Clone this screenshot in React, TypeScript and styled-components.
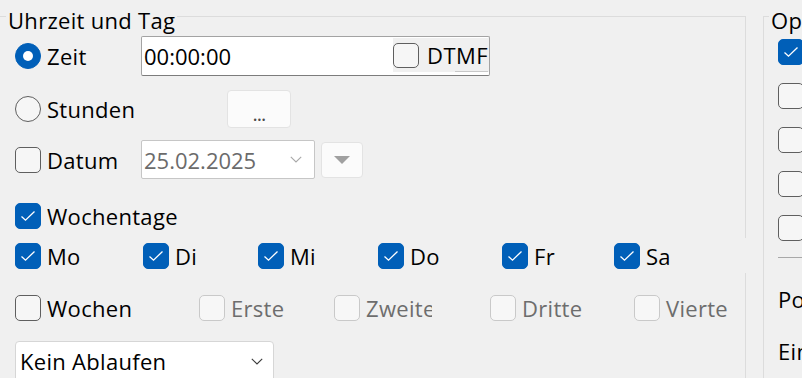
import React from "react";
import styled, { createGlobalStyle } from "styled-components";

const GlobalStyle = createGlobalStyle`
  html, body {
    margin: 0;
    padding: 0;
    background: #f0f0f0;
  }
  body {
    font-family: "Open Sans", "Noto Sans", sans-serif;
    font-size: 22px;
    letter-spacing: 0.3px;
    color: #000;
  }
`;

const days = ["Mo", "Di", "Mi", "Do", "Fr", "Sa"];
const weeks = ["Erste", "Zweite", "Dritte", "Vierte"];
const optionChecks = [true, false, false, false, false];

const Page = styled.div`
  display: flex;
  align-items: stretch;
  gap: 17px;
  width: 802px;
  height: 378px;
  overflow: hidden;
  background: #f0f0f0;
`;

const LeftColumn = styled.div`
  flex: 0 0 746px;
  display: flex;
  flex-direction: column;
`;

const Group = styled.fieldset<{ $side: "left" | "right" }>`
  margin: 0;
  padding: 0;
  min-width: 0;
  border: 0;
  border-top: 1px solid #dcdcdc;
  ${(p) =>
    p.$side === "left"
      ? "border-right: 1px solid #dcdcdc;"
      : "border-left: 1px solid #dcdcdc; flex: 1;"}
`;

const Legend = styled.legend<{ $inset: number }>`
  margin-left: ${(p) => p.$inset}px;
  padding: 9px 2px 1px;
  line-height: 22px;
  white-space: nowrap;
`;

const GroupBody = styled.div`
  display: flex;
  flex-direction: column;
  padding: 4px 0 9px 15px;
`;

const Row = styled.div<{ $top?: number; $height: number }>`
  display: flex;
  align-items: center;
  margin-top: ${(p) => p.$top ?? 0}px;
  height: ${(p) => p.$height}px;
`;

const Choice = styled.label<{ $disabled?: boolean }>`
  display: flex;
  align-items: center;
  gap: 6px;
  flex: 0 0 auto;
  color: ${(p) => (p.$disabled ? "#6d6d6d" : "#000")};
  white-space: nowrap;
  line-height: 26px;
`;

const Caption = styled.span<{ $clip?: number }>`
  display: block;
  ${(p) => (p.$clip ? `max-width: ${p.$clip}px; overflow: hidden;` : "")}
`;

const Box = styled.span<{ $checked?: boolean; $disabled?: boolean; $h?: number }>`
  box-sizing: border-box;
  display: flex;
  align-items: center;
  justify-content: center;
  flex: 0 0 26px;
  width: 26px;
  height: ${(p) => p.$h ?? 26}px;
  border-radius: 5px;
  background: ${(p) => (p.$checked ? "#005fb8" : p.$disabled ? "#f7f7f7" : "#f6f6f6")};
  border: ${(p) =>
    p.$checked
      ? "1px solid #005fb8"
      : p.$disabled
      ? "1px solid #c9c9c9"
      : "1.5px solid #5f5f5f"};
`;

const Radio = styled.span<{ $checked?: boolean }>`
  box-sizing: border-box;
  display: flex;
  align-items: center;
  justify-content: center;
  flex: 0 0 26px;
  width: 26px;
  height: 26px;
  border-radius: 50%;
  background: ${(p) => (p.$checked ? "#005fb8" : "#f6f6f6")};
  border: ${(p) => (p.$checked ? "1px solid #005fb8" : "1.5px solid #5f5f5f")};

  &::after {
    content: "";
    display: ${(p) => (p.$checked ? "block" : "none")};
    width: 10px;
    height: 10px;
    border-radius: 50%;
    background: #fff;
  }
`;

const TextField = styled.div`
  position: relative;
  box-sizing: border-box;
  width: 349px;
  height: 40px;
  display: flex;
  align-items: center;
  padding-left: 2px;
  letter-spacing: 0;
  background: #fff;
  border: 1px solid #a3a3a3;
  border-bottom-color: #7c7c7c;
  border-radius: 2px;
`;

const DtmfOverlay = styled.div`
  position: absolute;
  left: 251px;
  top: 1px;
  width: 96px;
  height: 34px;
  display: flex;
  align-items: center;
  gap: 8px;
  letter-spacing: 0.5px;
  background: #f0f0f0;
  overflow: hidden;
  white-space: nowrap;

  &::after {
    content: "";
    position: absolute;
    right: 1px;
    bottom: 0;
    width: 33px;
    height: 1px;
    background: #c8c8c8;
  }
`;

const LabelCell = styled.div`
  flex: 0 0 126px;
  display: flex;
`;

const FlatButton = styled.button<{ $width: number; $height: number; $left: number }>`
  box-sizing: border-box;
  display: flex;
  align-items: center;
  justify-content: center;
  width: ${(p) => p.$width}px;
  height: ${(p) => p.$height}px;
  margin-left: ${(p) => p.$left}px;
  padding: 0;
  background: #fbfbfb;
  border: 1px solid #e3e3e3;
  border-radius: 4px;
  font: inherit;
  color: #4a4a4a;
`;

const Dots = styled.span`
  font-size: 20px;
  line-height: 20px;
  margin-top: 10px;
  letter-spacing: -1px;
`;

const DateField = styled.div`
  box-sizing: border-box;
  width: 174px;
  height: 39px;
  display: flex;
  align-items: center;
  justify-content: space-between;
  padding: 0 12px 0 2px;
  letter-spacing: 0;
  background: #fff;
  border: 1px solid #c6c6c6;
  border-radius: 2px;
  color: #6b6b6b;
`;

const DayGrid = styled.div<{ $columns: string }>`
  display: grid;
  grid-template-columns: ${(p) => p.$columns};
  align-items: center;
  height: 26px;
`;

const DaysRow = styled.div`
  margin-top: 5px;
  padding-left: 15px;
`;

const LowerSection = styled.div`
  flex: 1;
  margin-top: 4px;
  padding: 22px 0 0 15px;
  border-right: 1px solid #dcdcdc;
`;

const Combo = styled.div`
  box-sizing: border-box;
  width: 259px;
  height: 44px;
  margin-top: 20px;
  display: flex;
  align-items: center;
  justify-content: space-between;
  padding: 0 10px 4px 4px;
  background: #fff;
  border: 1px solid #d6d6d6;
  border-radius: 4px;
`;

const OptionsBody = styled.div`
  display: flex;
  flex-direction: column;
  gap: 18px;
  padding: 7px 0 0 14px;
`;

const Separator = styled.div`
  height: 1px;
  margin: -2px 0 0;
  background: #a8a8a8;
`;

const PlainLine = styled.div<{ $top: number }>`
  margin-top: ${(p) => p.$top}px;
  line-height: 26px;
  white-space: nowrap;
`;

const Check = () => (
  <svg width="16" height="12" viewBox="0 0 16 12">
    <path d="M1.5 6.5 L5.5 10.2 L14.5 1.5" fill="none" stroke="#fff" strokeWidth="1.3" />
  </svg>
);

const Chevron = ({ color }: { color: string }) => (
  <svg width="12" height="7" viewBox="0 0 12 7">
    <path d="M0.8 0.8 L6 6 L11.2 0.8" fill="none" stroke={color} strokeWidth="1.1" />
  </svg>
);

const Triangle = () => (
  <svg width="16" height="8" viewBox="0 0 16 8">
    <path d="M0 0 H16 L8 8 Z" fill="#a0a0a0" />
  </svg>
);

const CheckOption = ({
  label,
  checked,
  disabled,
  clip,
}: {
  label: string;
  checked?: boolean;
  disabled?: boolean;
  clip?: number;
}) => (
  <Choice $disabled={disabled}>
    <Box $checked={checked} $disabled={disabled}>
      {checked ? <Check /> : null}
    </Box>
    <Caption $clip={clip}>{label}</Caption>
  </Choice>
);

const App = () => {
  return (
    <>
      <GlobalStyle />
      <Page>
        <LeftColumn>
          <Group $side="left">
            <Legend $inset={6}>Uhrzeit und Tag</Legend>
            <GroupBody>
              <Row $height={40}>
                <LabelCell>
                  <Choice>
                    <Radio $checked />
                    <Caption>Zeit</Caption>
                  </Choice>
                </LabelCell>
                <TextField>
                  00:00:00
                  <DtmfOverlay>
                    <Box $h={25} />
                    <span>DTMF</span>
                  </DtmfOverlay>
                </TextField>
              </Row>

              <Row $top={14} $height={38}>
                <LabelCell>
                  <Choice>
                    <Radio />
                    <Caption>Stunden</Caption>
                  </Choice>
                </LabelCell>
                <FlatButton $width={64} $height={38} $left={86}>
                  <Dots>...</Dots>
                </FlatButton>
              </Row>

              <Row $top={12} $height={39}>
                <LabelCell>
                  <CheckOption label="Datum" />
                </LabelCell>
                <DateField>
                  25.02.2025
                  <Chevron color="#a8a8a8" />
                </DateField>
                <FlatButton $width={42} $height={36} $left={6}>
                  <Triangle />
                </FlatButton>
              </Row>

              <Row $top={24} $height={26}>
                <CheckOption label="Wochentage" checked />
              </Row>
            </GroupBody>
          </Group>

          <DaysRow>
            <DayGrid $columns="128px 115px 120px 124px 112px auto">
              {days.map((d) => (
                <CheckOption key={d} label={d} checked />
              ))}
            </DayGrid>
          </DaysRow>

          <LowerSection>
            <DayGrid $columns="184px 135px 156px 144px auto">
              <CheckOption label="Wochen" />
              {weeks.map((w) => (
                <CheckOption key={w} label={w} disabled clip={w === "Zweite" ? 66 : undefined} />
              ))}
            </DayGrid>
            <Combo>
              Kein Ablaufen
              <Chevron color="#3a3a3a" />
            </Combo>
          </LowerSection>
        </LeftColumn>

        <Group $side="right">
          <Legend $inset={5}>Optionen</Legend>
          <OptionsBody>
            {optionChecks.map((c, i) => (
              <Box key={i} $checked={c}>
                {c ? <Check /> : null}
              </Box>
            ))}
            <Separator />
            <PlainLine $top={10}>Position</PlainLine>
            <PlainLine $top={8}>Ein</PlainLine>
          </OptionsBody>
        </Group>
      </Page>
    </>
  );
};

export default App;
